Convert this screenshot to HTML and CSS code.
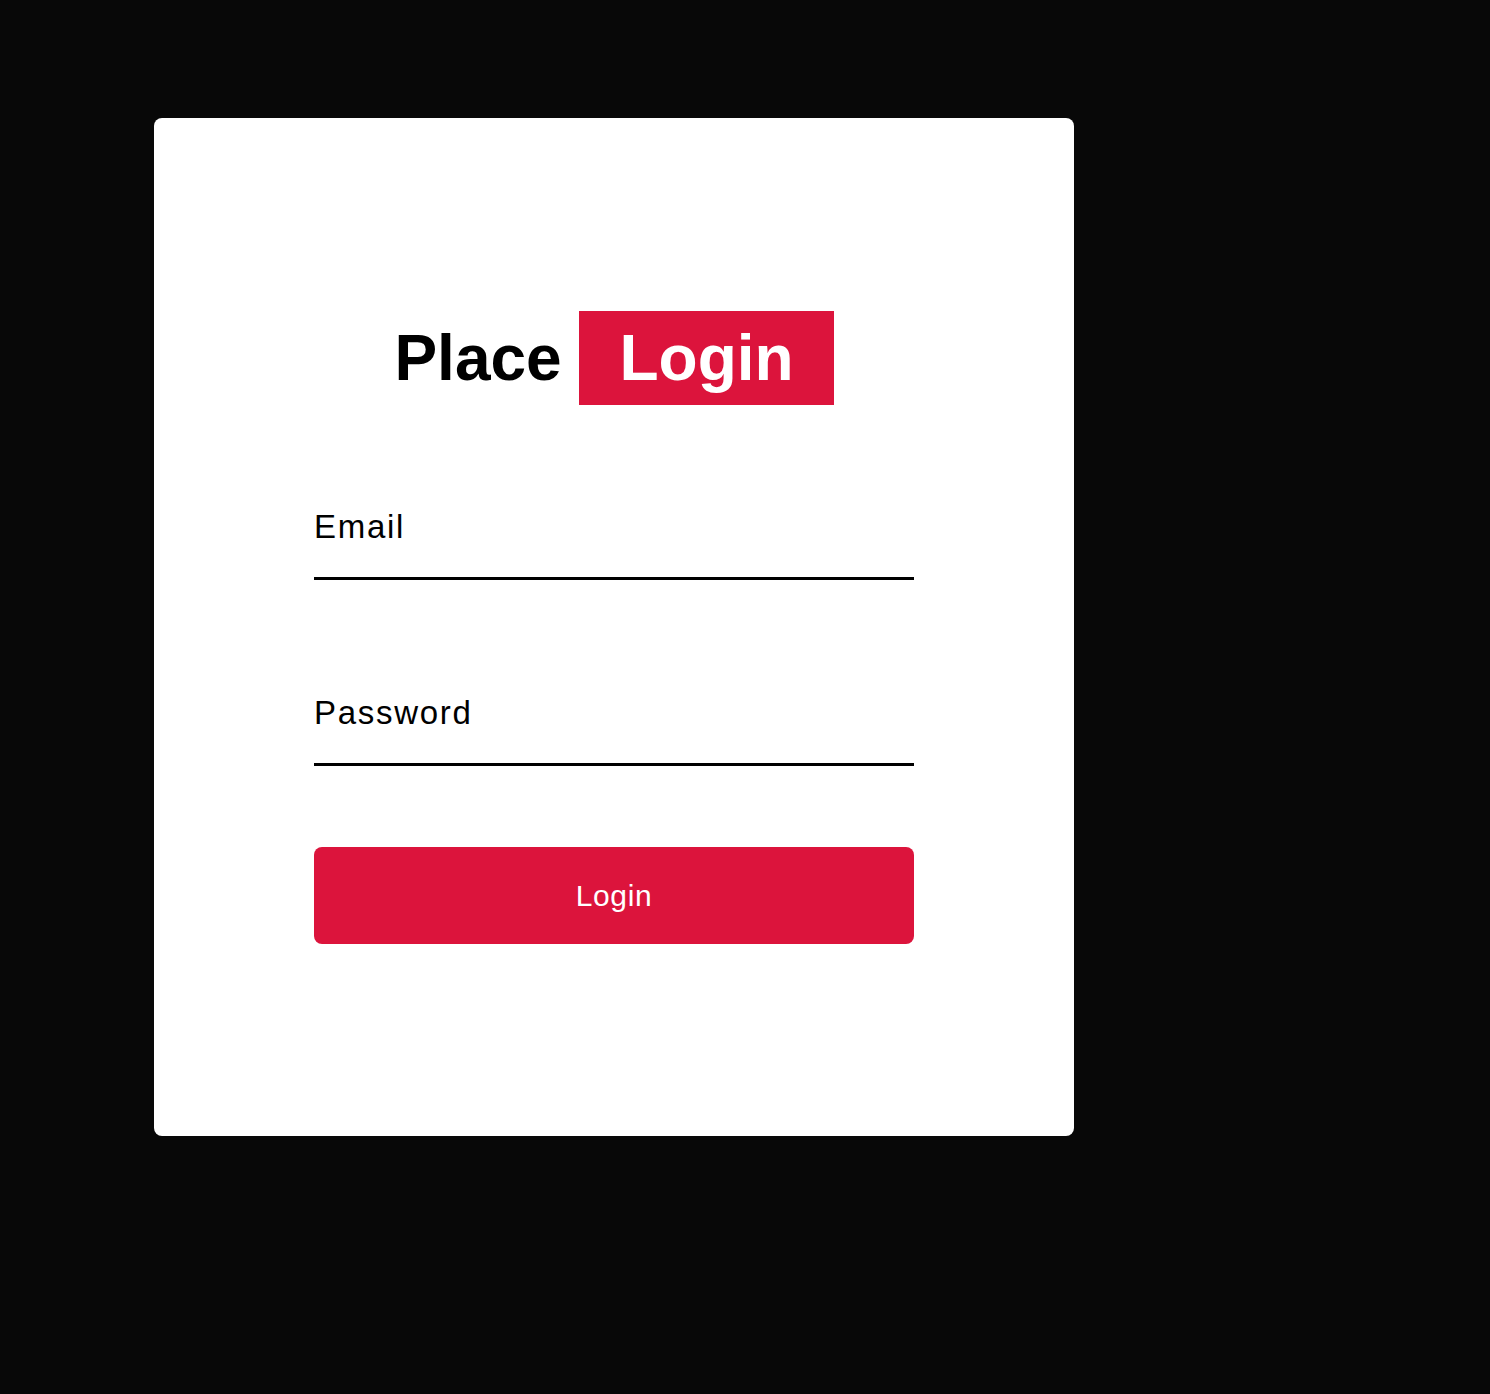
FILE: index.html
```html
<!DOCTYPE html>
<html lang="en">
<head>
<meta charset="utf-8">
<title>Place Login</title>
<link rel="stylesheet" href="styles.css">
</head>
<body>
<main class="card">
  <h1 class="title">Place <span class="title-badge">Login</span></h1>
  <form class="form">
    <input class="field" type="email" placeholder="Email">
    <input class="field field-password" type="password" placeholder="Password">
    <button class="submit" type="button">Login</button>
  </form>
</main>
</body>
</html>
```
FILE: styles.css
```css
html, body {
  margin: 0;
  background: #080808;
}
body {
  padding: 118px 0 0 154px;
  min-height: 1394px;
  box-sizing: border-box;
  font-family: "Liberation Sans", Arial, Helvetica, sans-serif;
}
.card {
  width: 920px;
  box-sizing: border-box;
  background: #ffffff;
  border-radius: 8px;
  padding: 193px 160px 192px;
}
.title {
  margin: 0;
  font-size: 64px;
  font-weight: 700;
  line-height: normal;
  text-align: center;
  color: #000;
  white-space: nowrap;
}
.title-badge {
  display: inline-block;
  background: #dc143c;
  color: #fff;
  padding: 10px 40px;
}
.form {
  margin: 72px 0 0;
  display: flex;
  flex-direction: column;
}
.field {
  display: block;
  width: 600px;
  height: 100px;
  box-sizing: content-box;
  padding: 0;
  margin: 0;
  border: none;
  border-bottom: 3px solid #000;
  outline: none;
  background: transparent;
  font-family: "Liberation Sans", Arial, sans-serif;
  font-size: 33px;
  letter-spacing: 1.7px;
  color: #000;
}
.field::placeholder {
  color: #000;
  opacity: 1;
}
.field-password {
  margin-top: 83px;
}
.submit {
  margin-top: 81px;
  width: 600px;
  height: 97px;
  border: none;
  border-radius: 8px;
  background: #dc143c;
  color: #fff;
  font-family: "Liberation Sans", Arial, sans-serif;
  font-size: 30px;
  letter-spacing: 0.6px;
  cursor: pointer;
}
```
